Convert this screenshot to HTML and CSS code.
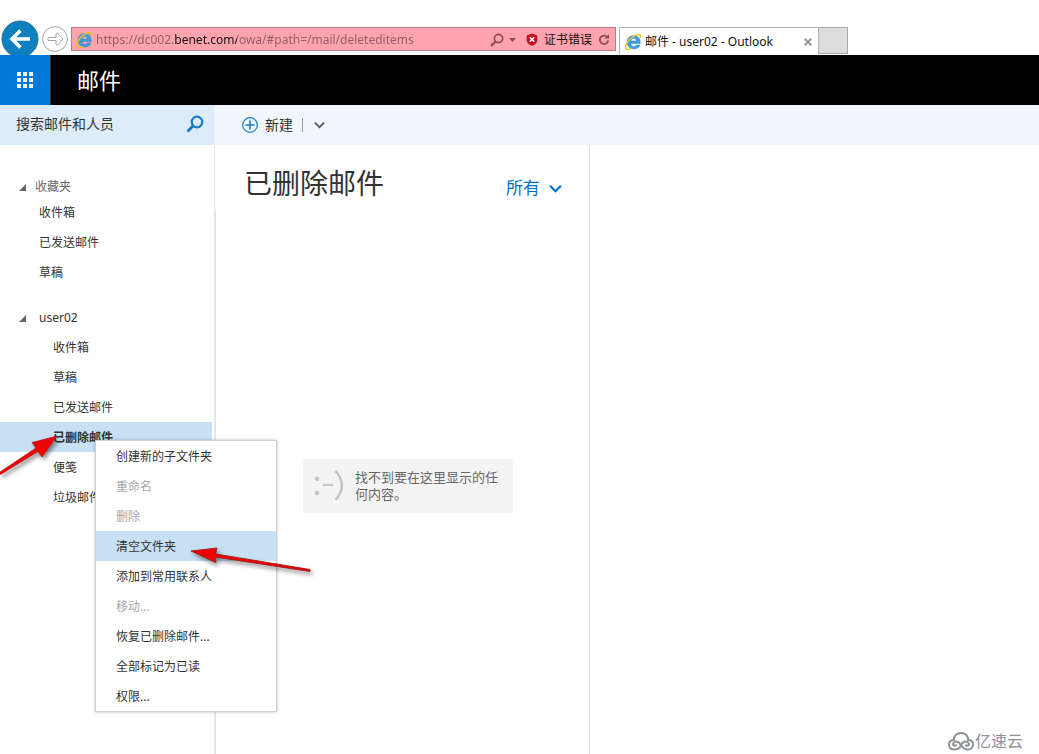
FILE: index.html
```html
<!DOCTYPE html>
<html lang="zh-CN">
<head>
<meta charset="utf-8">
<meta name="viewport" content="width=device-width, initial-scale=1">
<title>邮件 - user02 - Outlook</title>
<link rel="stylesheet" href="styles.css">
</head>
<body>
<svg class="defs" width="0" height="0" aria-hidden="true">
  <symbol id="ie" viewBox="0 0 16 16">
    <path d="M4.900 9.500H15.300C15.700 4.500 12.800 1.500 8.800 1.500C4.800 1.500 2 4.400 2 8.300C2 12.300 4.900 15 8.900 15C11.800 15 14.100 13.500 15 11H11.300C10.700 12 10 12.400 8.900 12.400C7 12.400 5.900 11.300 5.900 9.500M6 6.900C6.300 5.200 7.300 4.300 8.800 4.300C10.300 4.300 11.400 5.200 11.500 6.900Z" fill="#3a9ee0" fill-rule="evenodd" stroke="#237fbd" stroke-width=".4"/>
    <path d="M1.700 15.300C-.8 13.600 1.800 7.400 6.700 3.500C10.600 .5 14.900 -.4 15.400 1.500C15.600 2.300 15.400 3.200 15 4" fill="none" stroke="#e3c52c" stroke-width="1.500"/>
    <path d="M1.700 15.300C3 15.900 4.700 15.200 6.300 14.200" fill="none" stroke="#e3c52c" stroke-width="1.400"/>
  </symbol>
  <symbol id="lens" viewBox="0 0 18 18">
    <circle cx="11" cy="7" r="5.300" fill="none" stroke="currentColor" stroke-width="2.200"/>
    <path d="M7.200 10.800L1.500 16.500" stroke="currentColor" stroke-width="3"/>
  </symbol>
  <symbol id="chevron" viewBox="0 0 12 8">
    <path d="M1 1.500L6 6.500L11 1.500" fill="none" stroke="currentColor" stroke-width="2"/>
  </symbol>
</svg>

<header class="browser">
  <nav class="history">
    <button class="back" aria-label="后退">
      <svg width="38" height="38" viewBox="0 0 38 38"><circle cx="19" cy="19" r="18" fill="#0e80bd" stroke="#2a6f95"/><path d="M29 19H11M19.500 10.500L11 19L19.500 27.500" fill="none" stroke="#fff" stroke-width="3.600"/></svg>
    </button>
    <button class="forward" aria-label="前进">
      <svg width="26" height="26" viewBox="0 0 26 26" fill="#fff" stroke="#a3a3a3"><circle cx="13" cy="13" r="12.400"/><path d="M6 11.500H14V7.500L15.500 7L21 13L15.500 19L14 18.500V14.500H6Z"/></svg>
    </button>
  </nav>
  <form class="address">
    <svg class="ie-icon" aria-hidden="true"><use href="#ie"/></svg>
    <input class="url" type="text" aria-label="地址" value="https://dc002.benet.com/owa/#path=/mail/deleteditems">
    <button type="button" class="address-search" aria-label="搜索"><svg width="14" height="14"><use href="#lens"/></svg></button>
    <button type="button" class="address-drop" aria-label="显示地址"><svg width="7" height="4" viewBox="0 0 7 4"><path d="M0 0H7L3.500 4Z" fill="currentColor"/></svg></button>
    <button type="button" class="cert">
      <svg width="12" height="13" viewBox="0 0 12 13"><path d="M6 .5C8 1.500 9.500 1.800 10.800 2C11.700 4 11.700 7 10.800 9.200C9.800 11 8 12.200 6 12.800C4 12.200 2.200 11 1.200 9.200C.3 7 .3 4 1.200 2C2.500 1.800 4 1.500 6 .5Z" fill="#c5101f"/><path d="M3.700 4.200L8.300 8.800M8.300 4.200L3.700 8.800" stroke="#fff" stroke-width="1.500"/></svg>
      <span>证书错误</span>
    </button>
    <button type="button" class="refresh" aria-label="刷新"><svg width="12" height="13" viewBox="0 0 12 13"><path d="M9.200 4A4.200 4.200 0 1 0 10.200 7.500" fill="none" stroke="currentColor" stroke-width="1.800"/><path d="M6.500 5.500H11V1Z" fill="currentColor"/></svg></button>
  </form>
  <div class="tabs">
    <div class="tab">
      <svg class="ie-icon" aria-hidden="true"><use href="#ie"/></svg>
      <span class="tab-title">邮件 - user02 - Outlook</span>
      <button class="tab-close" aria-label="关闭"><svg width="8" height="8" viewBox="0 0 8 8"><path d="M.7.7L7.300 7.300M7.300.7L.7 7.300" stroke="#9a9a9a" stroke-width="2"/></svg></button>
    </div>
    <button class="new-tab" aria-label="新建选项卡"></button>
  </div>
</header>

<div class="suite">
  <button class="launcher" aria-label="应用启动器">
    <svg width="16" height="16" viewBox="0 0 16 16" fill="#fff"><path d="M0 0h4v4H0zM6 0h4v4H6zM12 0h4v4h-4zM0 6h4v4H0zM6 6h4v4H6zM12 6h4v4h-4zM0 12h4v4H0zM6 12h4v4H6zM12 12h4v4h-4z"/></svg>
  </button>
  <h1 class="app-name">邮件</h1>
</div>

<div class="toolbar">
  <form class="search">
    <input class="search-input" type="text" placeholder="搜索邮件和人员" aria-label="搜索邮件和人员">
    <button type="button" class="search-go" aria-label="搜索"><svg width="18" height="18"><use href="#lens"/></svg></button>
  </form>
  <div class="commands">
    <button class="new-mail">
      <svg width="16" height="16" viewBox="0 0 16 16" fill="none" stroke="#1b7bc9"><circle cx="8" cy="8" r="7.300" stroke-width="1.200"/><path d="M8 3.500V12.500M3.500 8H12.500" stroke-width="1.600"/></svg>
      <span>新建</span>
    </button>
    <button class="new-more" aria-label="更多"><svg width="11" height="8"><use href="#chevron"/></svg></button>
  </div>
</div>

<div class="workspace">
  <nav class="folders">
    <section class="group">
      <h2 class="group-title favorites"><svg class="twist" viewBox="0 0 7 7"><path d="M7 0V7H0Z"/></svg>收藏夹</h2>
      <ul class="folder-list">
        <li><a href="#">收件箱</a></li>
        <li><a href="#">已发送邮件</a></li>
        <li><a href="#">草稿</a></li>
      </ul>
    </section>
    <section class="group">
      <h2 class="group-title account"><svg class="twist" viewBox="0 0 7 7"><path d="M7 0V7H0Z"/></svg>user02</h2>
      <ul class="folder-list nested">
        <li><a href="#">收件箱</a></li>
        <li><a href="#">草稿</a></li>
        <li><a href="#">已发送邮件</a></li>
        <li class="selected">
          <a href="#">已删除邮件</a>
          <div class="menu" role="menu">
            <button role="menuitem">创建新的子文件夹</button>
            <button role="menuitem" disabled>重命名</button>
            <button role="menuitem" disabled>删除</button>
            <button role="menuitem" class="active">清空文件夹</button>
            <button role="menuitem">添加到常用联系人</button>
            <button role="menuitem" disabled>移动...</button>
            <button role="menuitem">恢复已删除邮件...</button>
            <button role="menuitem">全部标记为已读</button>
            <button role="menuitem">权限...</button>
          </div>
          <svg class="pointer pointer-folder" width="62" height="46" viewBox="0 0 62 46"><path d="M-3 42L36 16L32 10.500L57 4L42 25L38 19.500L-3 44.500Z" fill="#f00000" stroke="#b01818" stroke-width=".7"/></svg>
          <svg class="pointer pointer-menu" width="126" height="34" viewBox="0 0 126 34"><path d="M3 8L29 5L27.500 11L122 26.500V28.500L27 14L28 19.500Z" fill="#f00000" stroke="#a01818" stroke-width=".9"/></svg>
        </li>
        <li><a href="#">便笺</a></li>
        <li><a href="#">垃圾邮件</a></li>
      </ul>
    </section>
  </nav>
  <div class="scroll-edge"></div>
  <main class="messages">
    <header class="list-head">
      <h2 class="list-title">已删除邮件</h2>
      <button class="filter"><span>所有</span><svg width="13" height="9"><use href="#chevron"/></svg></button>
    </header>
    <div class="empty">
      <svg width="31" height="36" viewBox="0 0 31 36" fill="none" stroke="#c4c4c4"><g fill="#c4c4c4" stroke="none"><circle cx="4" cy="11" r="2.200"/><circle cx="4" cy="25" r="2.200"/></g><path d="M10 17H20" stroke-width="2"/><path d="M22.500 3C31 12 31 23 22.500 32" stroke-width="2.500"/></svg>
      <p>找不到要在这里显示的任何内容。</p>
    </div>
  </main>
  <section class="reading" aria-label="阅读窗格"></section>
</div>

<div class="brand">
  <svg width="26" height="19" viewBox="0 0 26 19" fill="none" stroke="#8c9298" stroke-width="2"><path d="M13 13C12 16 10 17.500 6.500 17.500C3 17.500 1 15.500 1 12.500C1 9.500 3.500 8 5.800 8C6 3.500 9 1 13 1C17 1 20 3.500 20.200 8C23 8 25 9.800 25 12.700C25 15.500 23 17.500 20 17.500C16.500 17.500 15 16 13 13C11.500 10.500 10 9.500 8.500 9.500C6.500 9.500 5 11 5 12.300C5 14 7.500 14.500 8.500 12.500"/><path d="M13 13C14.500 10.500 16 9.500 17.500 9.500C19.500 9.500 21 11 21 12.300C21 14 18.500 14.500 17.500 12.500"/></svg>
  <span>亿速云</span>
</div>
</body>
</html>
```
FILE: styles.css
```css
* { box-sizing: border-box; }

body {
  margin: 0;
  min-height: 100vh;
  display: flex;
  flex-direction: column;
  position: relative;
  background: #fff;
  color: #333;
  font: 12px/16px "Noto Sans", "Noto Sans CJK SC", sans-serif;
}

button, input { font: inherit; color: inherit; border: 0; padding: 0; margin: 0; background: none; }
button { display: flex; align-items: center; }
svg { flex: none; display: block; }
h1, h2, p, ul { margin: 0; padding: 0; font-weight: normal; }
ul { list-style: none; }
a { color: inherit; text-decoration: none; }
.defs { position: absolute; }

/* Browser chrome */
.browser { height: 55px; padding-top: 20px; display: flex; align-items: flex-start; overflow: hidden; }
.history { display: flex; gap: 3px; padding-left: 1px; width: 71px; }
.forward { margin-top: 6px; height: 26px; }
.ie-icon { width: 16px; height: 16px; }
.address {
  width: 545px;
  height: 24px;
  margin-top: 7px;
  padding: 1px 5px 0 4px;
  display: flex;
  align-items: center;
  border: 1px solid #b87d84;
  background: #ffa3af;
  color: #8d4d56;
}
.url {
  flex: 1;
  min-width: 0;
  padding-left: 4px;
  -webkit-text-fill-color: transparent;
  background: linear-gradient(90deg, #8d5d64 83px, #111 83px, #111 145px, #8d5d64 145px);
  -webkit-background-clip: text;
  background-clip: text;
}
.address-drop { margin-left: 5px; }
.cert { gap: 6px; margin-left: 10px; color: #111; }
.refresh { margin-left: 6px; }
.tabs { display: flex; height: 28px; margin: 7px 0 0 3px; }
.tab {
  width: 200px;
  padding: 0 6px 0 5px;
  display: flex;
  align-items: center;
  gap: 4px;
  border: 1px solid #b4b4b4;
  border-bottom: 0;
  color: #111;
}
.tab-title { flex: 1; white-space: nowrap; }
.new-tab { width: 29px; height: 27px; background: #dcdcdc; border: 1px solid #a8a8a8; border-left: 0; }

/* Suite bar */
.suite { height: 50px; display: flex; align-items: center; background: #000; color: #fff; }
.launcher { width: 51px; height: 50px; justify-content: center; background: #0078d7; border-right: 1px solid #333; }
.app-name { margin-left: 26px; font-size: 22px; line-height: 32px; }

/* Toolbar */
.toolbar { height: 40px; display: flex; background: #eff6fc; }
.search { width: 214px; padding: 0 10px 2px 16px; display: flex; align-items: center; background: #deecf9; font-size: 14px; }
.search-input { flex: 1; min-width: 0; }
.search-input::placeholder { color: #333; opacity: 1; }
.search-go { color: #1b7bc9; }
.commands { display: flex; align-items: center; padding-left: 28px; font-size: 14px; }
.new-mail { gap: 7px; }
.new-more { height: 14px; margin-left: 9px; padding-left: 11px; border-left: 1px solid #999; color: #555; }

/* Panes */
.workspace { flex: 1; display: flex; }
.folders { width: 214px; padding: 32px 2px 0 0; }
.group { margin-bottom: 15px; }
.group-title { display: flex; align-items: center; padding-left: 19px; font-size: 12px; }
.favorites { height: 20px; gap: 9px; color: #666; }
.account { height: 30px; gap: 13px; padding-top: 2px; }
.twist { width: 7px; height: 7px; fill: #666; }
.folder-list a { display: flex; align-items: center; height: 30px; padding: 2px 0 0 39px; }
.nested a { padding-left: 53px; }
.selected { position: relative; background: #c7e0f4; }
.selected > a { font-weight: bold; }
.scroll-edge { width: 2px; margin-top: 64px; background: #e2e2e2; }
.messages { width: 376px; margin-left: -2px; border-left: 1px solid #eaeaea; border-right: 1px solid #e0e0e0; }
.list-head { display: flex; align-items: center; justify-content: space-between; padding: 17px 27px 0 29px; }
.list-title { font-size: 28px; line-height: 42px; }
.filter { gap: 9px; padding-top: 10px; font-size: 17px; line-height: 24px; color: #0072c6; }
.empty {
  width: 210px;
  height: 54px;
  margin: 255px auto 0 88px;
  padding: 0 10px;
  display: flex;
  align-items: center;
  gap: 11px;
  background: #f4f4f4;
  color: #666;
  font-size: 13px;
  line-height: 17px;
}
.reading { flex: 1; }

/* Folder context menu */
.menu {
  position: absolute;
  top: 18px;
  left: 95px;
  z-index: 2;
  width: 182px;
  border: 1px solid #d0d0d0;
  background: #fff;
  box-shadow: 0 0 3px rgba(0, 0, 0, .25);
}
.menu button { width: 100%; height: 30px; padding: 2px 0 0 20px; }
.menu button:disabled { color: #a6a6a6; }
.menu .active { background: #c7e0f4; }

/* Annotation arrows */
.pointer { position: absolute; z-index: 3; pointer-events: none; filter: drop-shadow(2px 3px 2px rgba(0, 0, 0, .45)); }
.pointer-folder { left: 0; top: 10px; }
.pointer-menu { left: 188px; top: 121px; }

.brand {
  position: absolute;
  right: 16px;
  bottom: 3px;
  display: flex;
  align-items: center;
  gap: 1px;
  color: #8c9298;
  font-size: 16px;
  line-height: 20px;
}
```
